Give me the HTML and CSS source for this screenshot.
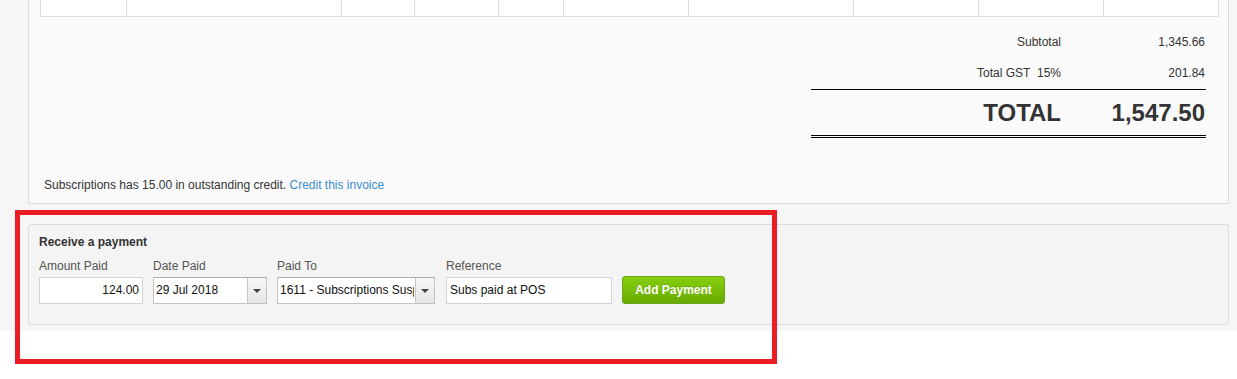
FILE: index.html
```html
<!DOCTYPE html>
<html lang="en">
<head>
<meta charset="utf-8"/>
<title>Invoice - Receive a payment</title>
<link rel="stylesheet" href="styles.css">
</head>
<body>
<div class="page">
  <div class="invoice">
    <table class="lines">
      <tr>
        <td class="c1"></td><td class="c2"></td><td class="c3"></td><td class="c4"></td><td class="c5"></td>
        <td class="c6"></td><td class="c7"></td><td class="c8"></td><td class="c9"></td><td class="c10"></td>
      </tr>
    </table>

    <div class="totals">
      <div class="row"><span class="lbl">Subtotal</span><span class="val">1,345.66</span></div>
      <div class="row"><span class="lbl">Total GST&nbsp; 15%</span><span class="val">201.84</span></div>
      <div class="row grand"><span class="lbl">TOTAL</span><span class="val">1,547.50</span></div>
    </div>

    <p class="credit">Subscriptions has 15.00 in outstanding credit. <a href="#">Credit this invoice</a></p>
  </div>

  <div class="payment">
    <h3>Receive a payment</h3>
    <div class="fields">
      <div class="field f-amount">
        <label>Amount Paid</label>
        <div class="box num">124.00</div>
      </div>
      <div class="field f-date">
        <label>Date Paid</label>
        <div class="box combo"><span class="txt">29 Jul 2018</span><span class="drop"></span></div>
      </div>
      <div class="field f-to">
        <label>Paid To</label>
        <div class="box combo"><span class="txt">1611 - Subscriptions Suspense</span><span class="drop"></span></div>
      </div>
      <div class="field f-ref">
        <label>Reference</label>
        <div class="box">Subs paid at POS</div>
      </div>
      <button class="add">Add Payment</button>
    </div>
  </div>
</div>
<div class="highlight"></div>
</body>
</html>
```

FILE: styles.css
```css
body { margin: 0; background: #fff; font-family: "Liberation Sans", Arial, sans-serif; font-size: 12px; color: #333; }
.page { background: #f6f6f6; padding: 0 8px 6px 28px; }

.invoice { background: #fafafa; border: 1px solid #dcdcdc; border-top: 0; padding: 0 9px 10px 11px; }
.lines { width: 100%; border-collapse: collapse; background: #fff; }
.lines td { height: 16px; padding: 0; border: 1px solid #dedede; border-top: 0; }
.c1 { width: 85px; } .c2 { width: 214px; } .c3 { width: 72px; } .c4 { width: 83px; } .c5 { width: 64px; }
.c6 { width: 124px; } .c7 { width: 164px; } .c8 { width: 124px; } .c9 { width: 124px; }

.totals { width: 395px; margin: 10px 13px 0 auto; }
.totals .row { display: grid; grid-template-columns: 1fr 145px; height: 31px; line-height: 31px; text-align: right; }
.totals .val { padding-right: 1px; }
.totals .row.grand { height: 45px; line-height: 45px; border-top: 1px solid #000; border-bottom: 3px double #000; font-size: 24px; font-weight: bold; color: #333; }

.credit { margin: 40px 0 0 4px; line-height: 15px; color: #333; }
.credit a { color: #3c8dcf; text-decoration: none; }

.payment { margin-top: 20px; background: #f4f4f4; border: 1px solid #dcdcdc; border-radius: 3px; padding: 10px 10px 20px; }
.payment h3 { margin: 0; font-size: 12px; line-height: 15px; font-weight: bold; color: #333; }
.fields { display: flex; align-items: flex-end; margin-top: 9px; }
.field { margin-right: 10px; }
.field label { display: block; line-height: 15px; margin-bottom: 3px; color: #555; }
.box { box-sizing: border-box; height: 27px; line-height: 25px; border: 1px solid #d3d3d3; background: #fff; padding: 0 3px; color: #111; font-size: 12px; white-space: nowrap; overflow: hidden; }
.box.num { text-align: right; }
.box.combo { position: relative; border-color: #c4c4c4; border-top-color: #adadad; padding-left: 2px; padding-right: 20px; }
.combo .txt { display: block; overflow: hidden; }
.combo .drop { position: absolute; top: 0; right: 0; bottom: 0; width: 18px; border-left: 1px solid #c8c8c8; background: linear-gradient(#f7f7f7, #e6e6e6); }
.combo .drop::after { content: ""; position: absolute; left: 5px; top: 11px; border-left: 4px solid transparent; border-right: 4px solid transparent; border-top: 4px solid #444; }
.f-amount .box { width: 104px; }
.f-date .box { width: 114px; }
.f-to { margin-right: 11px; }
.f-to .box { width: 158px; }
.f-ref .box { width: 166px; }

.add { box-sizing: border-box; width: 103px; height: 28px; border: 1px solid #6aa51c; border-radius: 3px; background: linear-gradient(#86cf0f, #68aa00); color: #fff; font-family: inherit; font-size: 12px; font-weight: bold; text-shadow: 0 -1px 0 rgba(0,0,0,0.15); padding: 0; }

.highlight { position: absolute; left: 15px; top: 210px; width: 752px; height: 144px; border: 5px solid #ed1c24; }
```
